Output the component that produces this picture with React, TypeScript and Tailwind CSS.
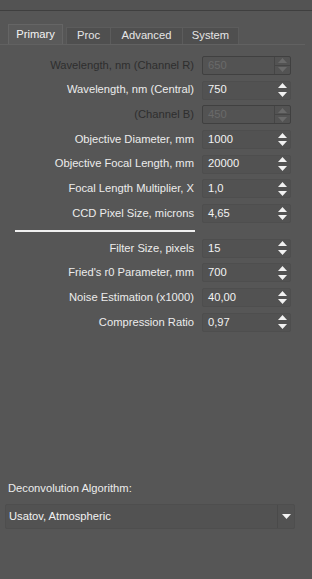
import React from "react";

interface Field {
  label: string;
  value: string;
  disabled?: boolean;
}

const groupA: Field[] = [
  { label: "Wavelength, nm (Channel R)", value: "650", disabled: true },
  { label: "Wavelength, nm (Central)", value: "750" },
  { label: "(Channel B)", value: "450", disabled: true },
  { label: "Objective Diameter, mm", value: "1000" },
  { label: "Objective Focal Length, mm", value: "20000" },
  { label: "Focal Length Multiplier, X", value: "1,0" },
  { label: "CCD Pixel Size, microns", value: "4,65" },
];

const groupB: Field[] = [
  { label: "Filter Size, pixels", value: "15" },
  { label: "Fried's r0 Parameter, mm", value: "700" },
  { label: "Noise Estimation (x1000)", value: "40,00" },
  { label: "Compression Ratio", value: "0,97" },
];

const Spinner: React.FC<{ disabled?: boolean }> = ({ disabled }) => {
  const c = disabled ? "#6a6a6a" : "#f2f2f2";
  return (
    <div
      className={
        disabled
          ? "flex flex-col w-[16px] h-full border-l border-[#454545]"
          : "flex flex-col w-[16px] h-full"
      }
    >
      <div className="flex-1 flex items-center justify-center">
        <svg width="9" height="5" viewBox="0 0 9 5">
          <path d="M4.5 0 L9 5 L0 5 Z" fill={c} />
        </svg>
      </div>
      <div
        className={
          disabled
            ? "flex-1 flex items-center justify-center border-t border-[#454545]"
            : "flex-1 flex items-center justify-center"
        }
      >
        <svg width="9" height="5" viewBox="0 0 9 5">
          <path d="M0 0 L9 0 L4.5 5 Z" fill={c} />
        </svg>
      </div>
    </div>
  );
};

const Row: React.FC<{ f: Field }> = ({ f }) => (
  <div className="flex items-center h-[24.7px]">
    <div
      className={
        f.disabled
          ? "w-[195px] text-right pr-[1px] text-[#2e2e2e]"
          : "w-[195px] text-right pr-[1px] text-[#ececec]"
      }
    >
      {f.label}
    </div>
    <div
      className={
        f.disabled
          ? "ml-[7px] w-[89px] h-[19px] flex items-center border border-[#404040] rounded-[2px] bg-[#535353]"
          : "ml-[7px] w-[89px] h-[19px] flex items-center border border-[#4e4e4e] rounded-[2px] bg-[#525252]"
      }
    >
      <span
        className={
          f.disabled
            ? "flex-1 pl-[5px] text-[#6a6a6a]"
            : "flex-1 pl-[5px] text-[#f2f2f2]"
        }
      >
        {f.value}
      </span>
      <Spinner disabled={f.disabled} />
    </div>
  </div>
);

export default function App() {
  return (
    <div
      className="w-[312px] h-[579px] bg-[#565656] flex flex-col text-[11.2px] leading-none"
      style={{ fontFamily: '"Liberation Sans", Arial, sans-serif' }}
    >
      <div className="h-[11px] bg-[#535353] border-b border-[#3f3f3f]" />
      <div className="flex items-end pl-[8px] pt-[13px] border-b border-[#616161] mr-[7px]">
        <div className="w-[55px] h-[20px] flex items-center justify-center bg-[#5a5a5a] border border-b-0 border-[#656565] text-[#f4f4f4] mr-[3px]">
          Primary
        </div>
        <div className="w-[45px] h-[17px] flex items-center justify-center bg-[#4f4f4f] border border-b-0 border-[#5c5c5c] text-[#e6e6e6]">
          Proc
        </div>
        <div className="w-[72px] h-[17px] flex items-center justify-center bg-[#4f4f4f] border border-b-0 border-l-0 border-[#5c5c5c] text-[#e6e6e6]">
          Advanced
        </div>
        <div className="w-[56px] h-[17px] flex items-center justify-center bg-[#4f4f4f] border border-b-0 border-l-0 border-[#5c5c5c] text-[#e6e6e6]">
          System
        </div>
      </div>
      <div className="flex flex-col pt-[8px]">
        {groupA.map((f) => (
          <Row key={f.label} f={f} />
        ))}
        <div className="h-[2px] bg-[#f0f0f0] ml-[15px] w-[180px] my-[4px]" />
        {groupB.map((f) => (
          <Row key={f.label} f={f} />
        ))}
      </div>
      <div className="flex-1" />
      <div className="px-[8px] text-[#ececec] mb-[10px]">Deconvolution Algorithm:</div>
      <div className="mx-[5px] mr-[17px] h-[25px] flex items-center rounded-[2px] border border-[#4e4e4e] bg-[#525252] mb-[50px]">
        <span className="flex-1 pl-[3px] text-[#f2f2f2]">Usatov, Atmospheric</span>
        <div className="w-[17px] h-full flex items-center justify-center border-l border-[#4a4a4a]">
          <svg width="9" height="5" viewBox="0 0 9 5">
            <path d="M0 0 L9 0 L4.5 5 Z" fill="#f2f2f2" />
          </svg>
        </div>
      </div>
    </div>
  );
}
